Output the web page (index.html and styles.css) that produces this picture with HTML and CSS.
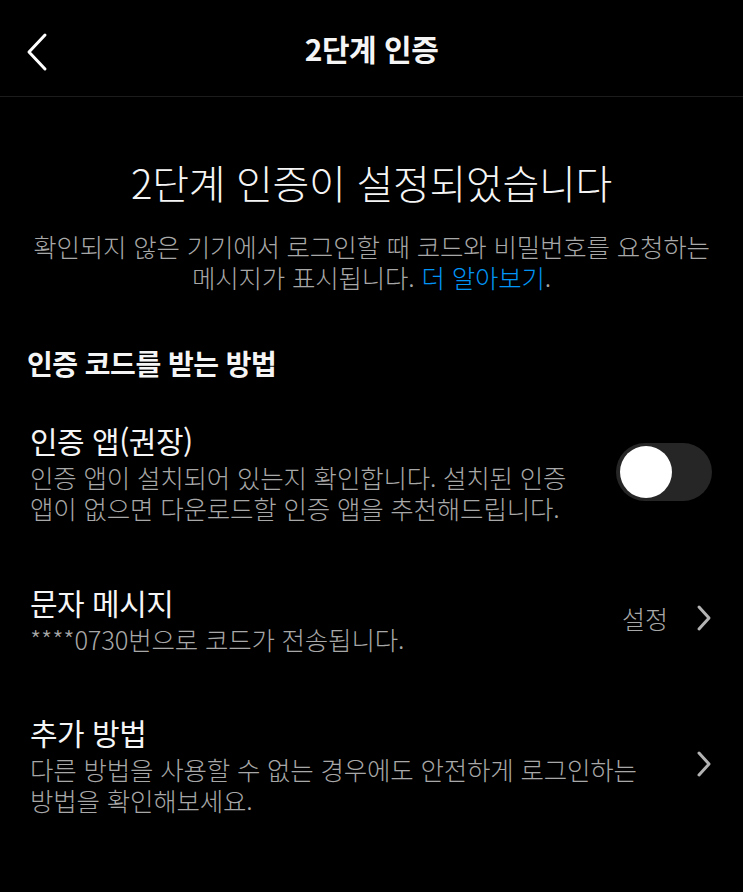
FILE: index.html
```html
<!DOCTYPE html>
<html lang="ko">
  <head>
    <meta charset="UTF-8" />
    <meta name="viewport" content="width=device-width, initial-scale=1.0" />
    <title>2단계 인증</title>
    <link rel="stylesheet" href="styles.css">
  </head>
  <body>
    <div class="header">
      <button class="back-btn" aria-label="뒤로">
        <svg width="24" height="40" viewBox="0 0 24 40">
          <path d="M20 3 L4 20 L20 37" fill="none" stroke="#fff" stroke-width="3" stroke-linecap="round" stroke-linejoin="round"/>
        </svg>
      </button>
      <h1>2단계 인증</h1>
    </div>

    <div class="intro">
      <h2>2단계 인증이 설정되었습니다</h2>
      <p>확인되지 않은 기기에서 로그인할 때 코드와 비밀번호를 요청하는 메시지가 표시됩니다. <a href="#">더 알아보기</a>.</p>
    </div>

    <h3 class="section-title">인증 코드를 받는 방법</h3>

    <div class="item">
      <div class="item-text">
        <p class="item-title">인증 앱(권장)</p>
        <p class="item-desc">인증 앱이 설치되어 있는지 확인합니다. 설치된 인증 앱이 없으면 다운로드할 인증 앱을 추천해드립니다.</p>
      </div>
      <div class="toggle"><span class="knob"></span></div>
    </div>

    <div class="item">
      <div class="item-text">
        <p class="item-title">문자 메시지</p>
        <p class="item-desc">****0730번으로 코드가 전송됩니다.</p>
      </div>
      <div class="item-action">
        <span class="action-label">설정</span>
        <svg class="chevron" width="16" height="28" viewBox="0 0 16 28">
          <path d="M3 3 L13 14 L3 25" fill="none" stroke="#b3b3b3" stroke-width="3" stroke-linecap="round" stroke-linejoin="round"/>
        </svg>
      </div>
    </div>

    <div class="item item-last">
      <div class="item-text">
        <p class="item-title">추가 방법</p>
        <p class="item-desc">다른 방법을 사용할 수 없는 경우에도 안전하게 로그인하는 방법을 확인해보세요.</p>
      </div>
      <div class="item-action">
        <svg class="chevron" width="16" height="28" viewBox="0 0 16 28">
          <path d="M3 3 L13 14 L3 25" fill="none" stroke="#b3b3b3" stroke-width="3" stroke-linecap="round" stroke-linejoin="round"/>
        </svg>
      </div>
    </div>
  </body>
</html>
```

FILE: styles.css
```css
body {
    margin: 0;
    background-color: #000;
    color: #f5f5f5;
    font-family: "Noto Sans CJK KR", "Noto Sans", sans-serif;
    word-break: keep-all;
}
p, h1, h2, h3 {
    margin: 0;
}
.header {
    display: flex;
    align-items: center;
    justify-content: center;
    position: relative;
    height: 96px;
    border-bottom: 1px solid #1c1c1c;
}
.back-btn {
    position: absolute;
    left: 25px;
    top: 32px;
    padding: 0;
    border: none;
    background: none;
    line-height: 0;
}
.header h1 {
    font-size: 30px;
    font-weight: 700;
    line-height: 40px;
    letter-spacing: -0.5px;
}
.intro {
    text-align: center;
    padding: 59px 20px 0;
}
.intro h2 {
    font-size: 40px;
    font-weight: 300;
    line-height: 52px;
    letter-spacing: -0.3px;
}
.intro p {
    margin-top: 22px;
    font-size: 25.5px;
    font-weight: 300;
    line-height: 31px;
    color: #a8a8a8;
    letter-spacing: -0.2px;
}
.intro a {
    color: #0095f6;
    text-decoration: none;
}
.section-title {
    margin-top: 53px;
    padding: 0 27px;
    font-size: 28px;
    font-weight: 700;
    line-height: 36px;
    letter-spacing: -0.5px;
}
.item {
    display: flex;
    align-items: center;
    justify-content: space-between;
    padding: 29px 31px 30px 30px;
}
.section-title + .item {
    padding-top: 39px;
}
.item-last {
    padding-top: 28px;
}
.item-text {
    flex: 1;
}
.item-title {
    font-size: 30px;
    font-weight: 400;
    line-height: 41px;
    letter-spacing: -0.5px;
}
.item-desc {
    font-size: 25.5px;
    font-weight: 300;
    line-height: 31px;
    color: #a8a8a8;
    letter-spacing: -0.2px;
}
.section-title + .item .item-desc {
    max-width: 560px;
}
.item-last .item-desc {
    max-width: 640px;
}
.item-action {
    display: flex;
    align-items: center;
    gap: 28px;
}
.action-label {
    font-size: 25px;
    font-weight: 300;
    color: #a8a8a8;
}
.chevron {
    display: block;
}
.toggle {
    width: 96px;
    height: 58px;
    border-radius: 29px;
    background-color: #262626;
    display: flex;
    align-items: center;
    padding-left: 4px;
    box-sizing: border-box;
}
.knob {
    width: 52px;
    height: 52px;
    border-radius: 50%;
    background-color: #fff;
}
```
